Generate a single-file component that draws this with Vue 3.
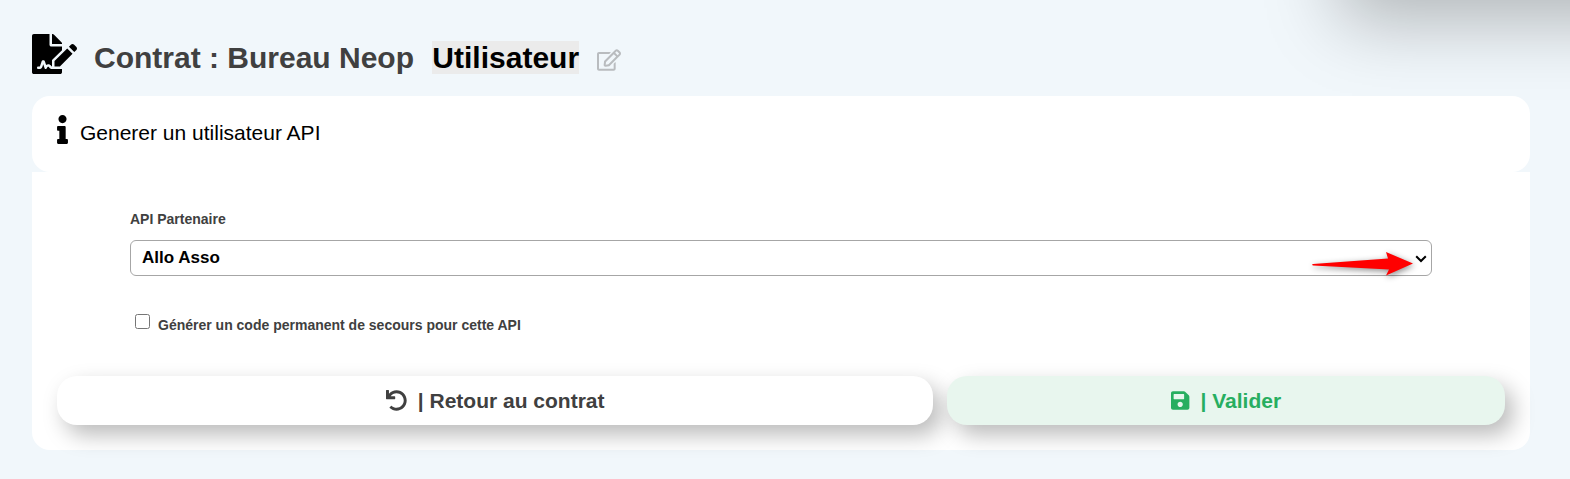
<template>
  <div class="page">
    <div class="corner-panel"></div>

    <header class="page-title">
      <svg class="icon-contract" viewBox="0 0 576 512" aria-hidden="true">
        <path
          d="M218.17 424.14c-2.95-5.92-8.09-6.52-10.17-6.52s-7.22.59-10.02 6.19l-7.67 15.34c-6.37 12.78-25.03 11.37-29.48-2.09L144 386.59l-10.61 31.88c-5.89 17.66-22.38 29.53-41 29.53H80c-8.84 0-16-7.16-16-16s7.16-16 16-16h12.39c4.83 0 9.11-3.08 10.64-7.66l18.19-54.64c3.3-9.81 12.44-16.41 22.78-16.41s19.48 6.59 22.77 16.41l13.88 41.64c19.75-16.19 54.06-9.7 66 14.16 1.89 3.78 5.49 5.95 9.36 6.26v-82.12l128-127.09V160H248c-13.2 0-24-10.8-24-24V0H24C10.7 0 0 10.7 0 24v464c0 13.3 10.7 24 24 24h336c13.3 0 24-10.7 24-24v-40l-128-.11c-16.12-.31-30.58-9.28-37.83-23.75zM384 121.9c0-6.3-2.5-12.4-7-16.9L279.1 7c-4.5-4.5-10.6-7-17-7H256v128h128v-6.1zm-96 225.06V416h68.99l161.68-162.78-67.88-67.88L288 346.96zm280.54-179.63l-31.87-31.87c-9.94-9.94-26.07-9.94-36.01 0l-27.25 27.25 67.88 67.88 27.25-27.25c9.95-9.94 9.95-26.07 0-36.01z"
        />
      </svg>
      <h1>
        Contrat : Bureau Neop <mark>Utilisateur</mark>
      </h1>
      <a href="#" class="edit-link" aria-label="Modifier">
        <svg viewBox="0 0 576 512" aria-hidden="true">
          <path
            d="M402.3 344.9l32-32c5-5 13.7-1.5 13.7 5.7V464c0 26.5-21.5 48-48 48H48c-26.5 0-48-21.5-48-48V112c0-26.5 21.5-48 48-48h273.5c7.1 0 10.7 8.6 5.7 13.7l-32 32c-1.5 1.5-3.5 2.3-5.7 2.3H48v352h352V350.5c0-2.1.8-4.1 2.3-5.6zm156.6-201.8L296.3 405.7l-90.4 10c-26.2 2.9-48.5-19.2-45.6-45.6l10-90.4L432.9 17.1c22.9-22.9 59.9-22.9 82.7 0l43.2 43.2c22.9 22.9 22.9 60 .1 82.8zM460.1 174L402 115.9 216.2 301.8l-7.3 65.3 65.3-7.3L460.1 174zm64.8-79.7l-43.2-43.2c-4.1-4.1-10.8-4.1-14.8 0L436 82l58.1 58.1 30.9-30.9c4-4.2 4-10.8-.1-14.9z"
          />
        </svg>
      </a>
    </header>

    <section class="card card-head">
      <svg class="icon-info" viewBox="0 0 192 512" aria-hidden="true">
        <path
          d="M20 424.229h20V279.771H20c-11.046 0-20-8.954-20-20V212c0-11.046 8.954-20 20-20h112c11.046 0 20 8.954 20 20v212.229h20c11.046 0 20 8.954 20 20V492c0 11.046-8.954 20-20 20H20c-11.046 0-20-8.954-20-20v-47.771c0-11.046 8.954-20 20-20zM96 0C56.235 0 24 32.235 24 72s32.235 72 72 72 72-32.235 72-72S135.764 0 96 0z"
        />
      </svg>
      <h2>Generer un utilisateur API</h2>
    </section>

    <form class="card card-body" @submit.prevent>
      <div class="fields">
        <label for="partner" class="field-label">API Partenaire</label>
        <div class="select-wrap">
          <select id="partner" v-model="partner">
            <option v-for="name in partners" :key="name">{{ name }}</option>
          </select>
          <svg class="chevron" viewBox="0 0 12 8" aria-hidden="true">
            <path d="M1.2 1.2 L6 6 L10.8 1.2" />
          </svg>
          <svg class="pointer" viewBox="0 0 104 26" aria-hidden="true">
            <path
              d="M2 13 L77 7.5 L75 1 L102 12.5 L75 24.5 L78 18.5 L2 14.5 Q0 13.8 2 13 Z"
            />
          </svg>
        </div>
        <div class="check-row">
          <input id="backup" v-model="backupCode" type="checkbox" />
          <label for="backup" class="field-label">
            Générer un code permanent de secours pour cette API
          </label>
        </div>
      </div>

      <div class="actions">
        <button type="button" class="btn btn-back">
          <svg viewBox="0 0 512 512" aria-hidden="true">
            <path
              d="M212.333 224.333H12c-6.627 0-12-5.373-12-12V12C0 5.373 5.373 0 12 0h48c6.627 0 12 5.373 12 12v78.112C117.773 39.279 184.26 7.47 258.175 8.007c136.906.994 246.448 111.623 246.157 248.532C504.041 393.258 393.12 504 256.333 504c-64.089 0-122.496-24.313-166.51-64.215-5.099-4.622-5.334-12.554-.467-17.42l33.967-33.967c4.474-4.474 11.662-4.717 16.401-.525C170.76 415.336 211.58 432 256.333 432c97.268 0 176-78.716 176-176 0-97.267-78.716-176-176-176-58.496 0-110.28 28.476-142.274 72.333h98.274c6.627 0 12 5.373 12 12v48c0 6.627-5.373 12-12 12z"
            />
          </svg>
          <span>| Retour au contrat</span>
        </button>
        <button type="submit" class="btn btn-save">
          <svg viewBox="0 0 448 512" aria-hidden="true">
            <path
              d="M433.941 129.941l-83.882-83.882A48 48 0 0 0 316.118 32H48C21.49 32 0 53.49 0 80v352c0 26.51 21.49 48 48 48h352c26.51 0 48-21.49 48-48V163.882a48 48 0 0 0-14.059-33.941zM224 416c-35.346 0-64-28.654-64-64 0-35.346 28.654-64 64-64s64 28.654 64 64c0 35.346-28.654 64-64 64zm96-304.52V212c0 6.627-5.373 12-12 12H76c-6.627 0-12-5.373-12-12V108c0-6.627 5.373-12 12-12h228.52c3.183 0 6.235 1.264 8.485 3.515l3.48 3.48A11.996 11.996 0 0 1 320 111.48z"
            />
          </svg>
          <span>| Valider</span>
        </button>
      </div>
    </form>
  </div>
</template>

<script setup>
import { ref } from "vue";

const partners = ["Allo Asso"];
const partner = ref("Allo Asso");
const backupCode = ref(false);
</script>

<style>
body {
  margin: 0;
  background: #f1f7fb;
}
</style>

<style scoped>
.page {
  position: relative;
  box-sizing: border-box;
  min-height: 100vh;
  padding: 33px 40px 28px 32px;
  overflow: hidden;
  background: #f1f7fb;
  color: #000;
  font-family: "Liberation Sans", Arial, sans-serif;
}
/* menu panel folded away above the page, only its shadow shows */
.corner-panel {
  position: absolute;
  top: -300px;
  right: -80px;
  width: 330px;
  height: 300px;
  box-shadow: 20px 20px 70px rgba(0, 0, 0, 0.27);
}
.page-title {
  position: relative;
  display: flex;
  align-items: center;
  height: 50px;
  margin-bottom: 13px;
}
.icon-contract {
  width: 45px;
  height: 40px;
  margin: 0 17px 8px 0;
}
h1 {
  margin: 0;
  color: #404040;
  font-size: 30px;
  line-height: 34px;
}
h1 mark {
  margin-left: 10px;
  background: #ebebeb;
  color: #000;
}
.edit-link {
  margin: 4px 0 0 18px;
}
.edit-link svg {
  display: block;
  width: 24px;
  height: 22px;
  fill: #b9bcbf;
}
.card {
  position: relative;
  background: #fff;
}
.card-head {
  display: flex;
  align-items: flex-start;
  gap: 12px;
  padding: 19px 25px 27px;
  border-radius: 18px;
}
.icon-info {
  width: 11px;
  height: 29px;
}
h2 {
  margin: 0;
  padding-top: 6px;
  font-size: 21px;
  font-weight: 400;
  line-height: 24px;
}
.card-body {
  padding: 39px 25px 25px;
  border-radius: 0 0 18px 18px;
}
.fields {
  padding: 0 73px;
}
.field-label {
  color: #404040;
  font-size: 14px;
  font-weight: 700;
  line-height: 16px;
}
.card-body .fields > .field-label {
  display: block;
  margin-bottom: 13px;
}
.select-wrap {
  position: relative;
}
select {
  display: block;
  width: 100%;
  height: 36px;
  padding: 0 32px 2px 11px;
  border: 1px solid #a6a6a6;
  border-radius: 6px;
  appearance: none;
  background: #fff;
  color: #000;
  font-family: inherit;
  font-size: 17px;
  font-weight: 700;
}
.chevron {
  position: absolute;
  top: 15px;
  right: 5px;
  width: 12px;
  height: 8px;
  fill: none;
  stroke: #000;
  stroke-width: 2;
  pointer-events: none;
}
.pointer {
  position: absolute;
  top: 11px;
  right: 17px;
  width: 104px;
  height: 26px;
  overflow: visible;
  fill: #f00;
  filter: drop-shadow(1px 2px 3px rgba(0, 0, 0, 0.45));
  pointer-events: none;
}
.check-row {
  display: flex;
  align-items: flex-start;
  gap: 8px;
  margin: 38px 0 43px;
  padding-left: 5px;
}
.check-row input {
  width: 15px;
  height: 15px;
  margin: 0;
}
.check-row label {
  padding-top: 3px;
}
.actions {
  display: flex;
  gap: 14px;
}
.btn {
  display: flex;
  align-items: center;
  justify-content: center;
  gap: 11px;
  min-width: 0;
  height: 49px;
  padding: 0;
  border: 0;
  border-radius: 20px;
  box-shadow: 8px 10px 22px rgba(0, 0, 0, 0.27);
  font-family: inherit;
  font-size: 21px;
  font-weight: 700;
  line-height: 24px;
}
.btn svg {
  height: 21px;
  fill: currentColor;
}
.btn-back {
  flex: 11 1 0;
  background: #fff;
  color: #404040;
}
.btn-save {
  flex: 7 1 0;
  background: #e8f6ee;
  color: #27ae60;
}
</style>
